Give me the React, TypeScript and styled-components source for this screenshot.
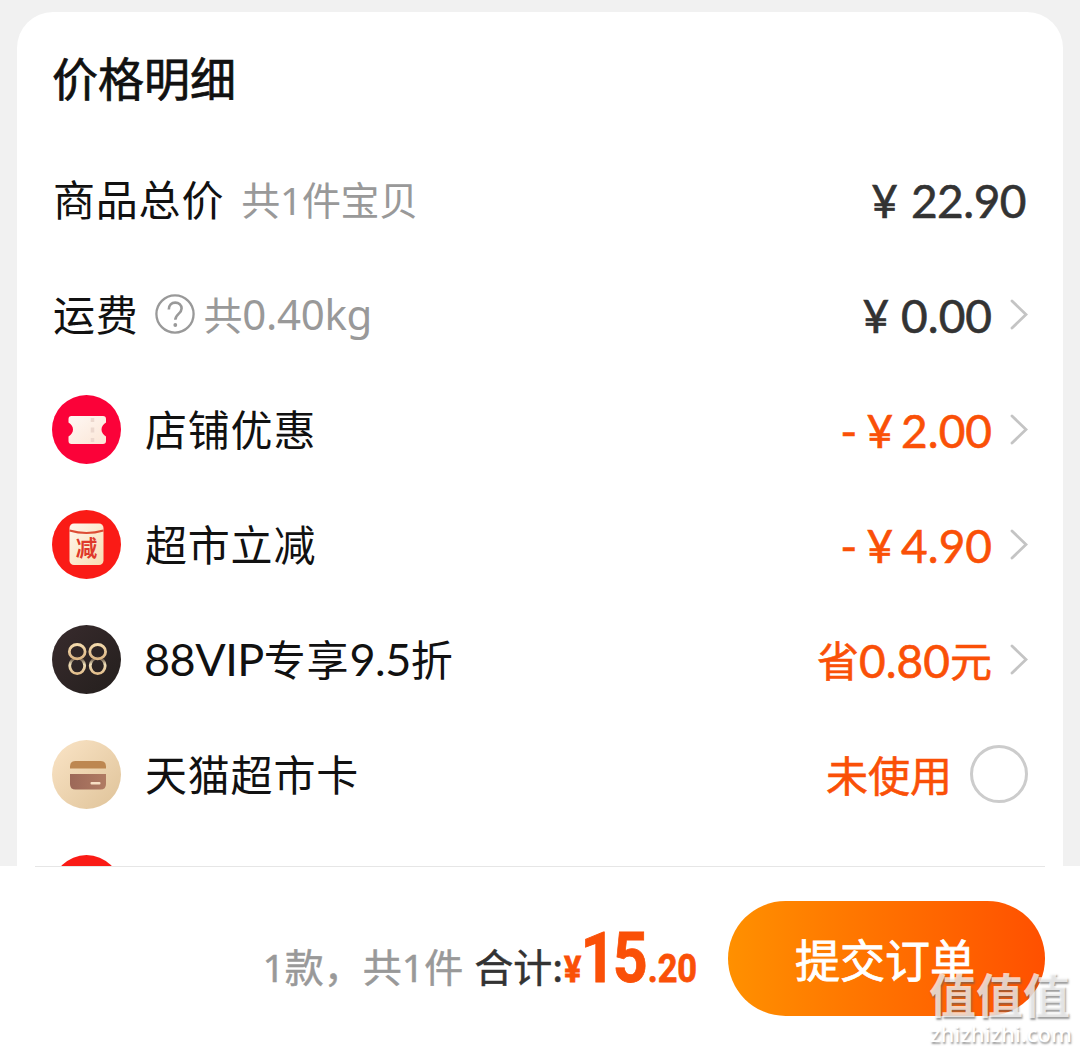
import React from 'react';
import styled, { createGlobalStyle } from 'styled-components';

const GlobalStyle = createGlobalStyle`
  * { box-sizing: border-box; }
  body { margin: 0; background: #f1f1f1; }
`;

const Page = styled.main`
  position: relative;
  display: flex;
  flex-direction: column;
  width: 1080px;
  height: 1052px;
  overflow: hidden;
  background: #f1f1f1;
  font-family: Lato, 'Noto Sans CJK SC', sans-serif;
  color: #111;
`;

const Viewport = styled.div`
  flex: none;
  height: 866px;
  padding: 12px 17px 0;
  overflow: hidden;
`;

const Card = styled.section`
  height: 960px;
  padding: 0 35px;
  background: #fff;
  border-radius: 36px 36px 0 0;
`;

const Title = styled.h1`
  margin: 0;
  height: 130px;
  font: 400 46px/128px 'Noto Sans CJK SC', sans-serif;
  -webkit-text-stroke: 0.7px #111;
`;

const Row = styled.div`
  display: flex;
  align-items: center;
  height: 115px;
  white-space: nowrap;
`;

const Label = styled.span<{ $indent?: number }>`
  font-size: 42px;
  line-height: 60px;
  letter-spacing: 0.8px;
  margin-left: ${(p) => p.$indent ?? 0}px;
`;

const LabelLatin = styled.span`
  font-size: 45px;
  letter-spacing: -0.5px;
`;

const Note = styled.span<{ $gap: number }>`
  font: 400 39px/60px 'Noto Sans', 'Noto Sans CJK SC', sans-serif;
  letter-spacing: -0.3px;
  margin-left: ${(p) => p.$gap}px;
  color: #999;
`;

const NoteLatin = styled.span`
  font-size: 42px;
`;

const Amount = styled.span<{ $accent?: boolean; $inset?: number }>`
  display: flex;
  align-items: center;
  margin-left: auto;
  padding: 3px ${(p) => p.$inset ?? 0}px 0 0;
  font-size: 46px;
  line-height: 60px;
  color: ${(p) => (p.$accent ? '#fa5007' : '#333')};
  -webkit-text-stroke: 0.6px currentColor;
`;

const Part = styled.span<{ $after?: number; $spacing?: number; $cjk?: boolean }>`
  margin-right: ${(p) => p.$after ?? 0}px;
  letter-spacing: ${(p) => p.$spacing ?? 0}px;
  font-size: ${(p) => (p.$cjk ? 42 : 46)}px;
`;

const Trailing = styled.span<{ $gap: number }>`
  display: flex;
  flex: none;
  margin-left: ${(p) => p.$gap}px;
`;

const Radio = styled.span`
  flex: none;
  width: 58px;
  height: 58px;
  margin: 0 0 1px 18px;
  border: 3px solid #ccc;
  border-radius: 50%;
`;

const Badge = styled.svg`
  flex: none;
  width: 69px;
  height: 69px;
`;

const Help = styled.svg`
  flex: none;
  width: 40px;
  height: 40px;
  margin: 0 0 1px 16px;
`;

const Footer = styled.footer`
  display: flex;
  flex: none;
  height: 186px;
  padding: 0 35px;
  background: #fff;
  white-space: nowrap;
`;

const FooterInner = styled.div`
  display: flex;
  flex: 1;
  align-items: flex-start;
  justify-content: flex-end;
  border-top: 1px solid #e6e6e6;
  padding-top: 34px;
`;

const Summary = styled.div`
  display: flex;
  align-items: baseline;
  padding-top: 22px;
`;

const Count = styled.span`
  font: 400 39px/60px 'Noto Sans', 'Noto Sans CJK SC', sans-serif;
  color: #999;
  -webkit-text-stroke: 0.5px #999;
`;

const TotalLabel = styled.span`
  margin: 0 1px 0 11px;
  font: 400 39px/60px 'Noto Sans CJK SC', sans-serif;
  color: #333;
  -webkit-text-stroke: 0.5px #333;
`;

const Total = styled.span`
  display: inline-flex;
  align-items: baseline;
  width: 135px;
  margin-right: 29px;
  font-family: Roboto, sans-serif;
  font-weight: 700;
  color: #fa5007;
  -webkit-text-stroke: 0.8px #fa5007;
  transform: scaleX(0.87);
  transform-origin: left;
`;

const Digits = styled.span<{ $size: number; $spacing?: number; $after?: number }>`
  margin-right: ${(p) => p.$after ?? 0}px;
  font-size: ${(p) => p.$size}px;
  letter-spacing: ${(p) => p.$spacing ?? 0}px;
  line-height: 70px;
`;

const Submit = styled.button`
  flex: none;
  width: 317px;
  height: 115px;
  padding: 0 3px 0 0;
  border: 0;
  border-radius: 58px;
  background: linear-gradient(90deg, #ff9000, #ff5000);
  color: #fff;
  font: 400 45px/112px 'Noto Sans CJK SC', sans-serif;
  -webkit-text-stroke: 0.8px #fff;
`;

const Watermark = styled.div`
  position: absolute;
  left: 929px;
  top: 964px;
  display: flex;
  flex-direction: column;
  color: rgba(255, 255, 255, 0.72);
  text-shadow: 1px 2px 2px rgba(90, 90, 90, 0.6);
`;

const MarkName = styled.span`
  font: 700 47px/58px 'Noto Sans CJK SC', sans-serif;
`;

const MarkSite = styled.span`
  margin-top: -3px;
  padding-left: 1px;
  font: 500 22px/28px 'Noto Sans', sans-serif;
  color: #fff;
`;

const Chevron = () => (
  <svg width="18" height="32" viewBox="0 0 18 32" fill="none">
    <path d="M2 2 16 15.500 2 29" stroke="#c4c4c4" strokeWidth="2.8" strokeLinecap="round" strokeLinejoin="miter" />
  </svg>
);

const Arrow = () => (
  <Trailing $gap={18}>
    <Chevron />
  </Trailing>
);

const HelpIcon = () => (
  <Help viewBox="0 0 40 40" fill="none" stroke="#999" strokeWidth="2.3">
    <circle cx="20" cy="20" r="18.6" />
    <path d="M13.8 15.5c0-4.2 2.8-6.9 6.4-6.9s6.4 2.5 6.4 6c0 5.200-6.300 5.400-6.300 11.200" strokeWidth="2.6" />
    <circle cx="20.3" cy="31" r="1.9" fill="#999" stroke="none" />
  </Help>
);

const CouponIcon = () => (
  <Badge viewBox="0 0 69 69">
    <defs>
      <linearGradient id="coupon" x1="0" x2="1" y1="0" y2="1">
        <stop offset="0" stopColor="#fff8f4" />
        <stop offset="1" stopColor="#fbe6d6" />
      </linearGradient>
    </defs>
    <circle cx="34.5" cy="34.5" r="34.5" fill="#fb0239" />
    <path
      d="M19.500 21h31.500q3 0 3 3v3.500q-4.500 3-4.500 7t4.500 7v4.500q0 3-3 3H19.500q-3 0-3-3v-4.500q4.500-3 4.500-7t-4.500-7v-3.500q0-3 3-3z"
      fill="url(#coupon)"
    />
    <path d="M40.500 23v4M40.500 32.500v5M40.500 43v4" stroke="#ecd8ce" strokeWidth="3.500" />
  </Badge>
);

const ReductionIcon = () => (
  <Badge viewBox="0 0 69 69">
    <defs>
      <linearGradient id="packet" x1="0" x2="1" y1="0" y2="1">
        <stop offset="0" stopColor="#fff8ee" />
        <stop offset="1" stopColor="#f9dcb2" />
      </linearGradient>
    </defs>
    <circle cx="34.5" cy="34.5" r="34.5" fill="#fa1b16" />
    <rect x="17.500" y="13.500" width="34" height="41.500" rx="4.500" fill="url(#packet)" />
    <path d="M17.500 20.500q17 5 34 0" fill="none" stroke="#dd4d35" strokeWidth="2" />
    <text x="34.500" y="45.500" textAnchor="middle" fontSize="21.500" fontWeight="700" fill="#df392b" fontFamily="'Noto Sans CJK SC', sans-serif">
      减
    </text>
  </Badge>
);

const VipIcon = () => (
  <Badge viewBox="0 0 69 69">
    <defs>
      <linearGradient id="vipTop" x1="0" x2="0" y1="0" y2="1">
        <stop offset="0" stopColor="#f3d9ab" />
        <stop offset="1" stopColor="#dcb685" />
      </linearGradient>
      <linearGradient id="vipBottom" x1="0" x2="0" y1="0" y2="1">
        <stop offset="0" stopColor="#4a3a32" />
        <stop offset="0.4" stopColor="#efdfb8" />
        <stop offset="1" stopColor="#e2bd8b" />
      </linearGradient>
      <linearGradient id="vipDisc" x1="0" x2="1" y1="0" y2="1">
        <stop offset="0" stopColor="#382b2d" />
        <stop offset="1" stopColor="#241f1d" />
      </linearGradient>
    </defs>
    <circle cx="34.5" cy="34.5" r="34.5" fill="url(#vipDisc)" />
    <g fill="none" strokeWidth="2.800">
      <ellipse cx="25.200" cy="40.800" rx="7.500" ry="7.900" stroke="url(#vipBottom)" />
      <ellipse cx="45.700" cy="40.800" rx="7.500" ry="7.900" stroke="url(#vipBottom)" />
      <ellipse cx="25.200" cy="26.700" rx="7.900" ry="7.200" stroke="url(#vipTop)" />
      <ellipse cx="45.700" cy="26.700" rx="7.900" ry="7.200" stroke="url(#vipTop)" />
    </g>
  </Badge>
);

const CardIcon = () => (
  <Badge viewBox="0 0 69 69">
    <defs>
      <linearGradient id="cardDisc" x1="0" x2="1" y1="0" y2="1">
        <stop offset="0" stopColor="#fae4c6" />
        <stop offset="1" stopColor="#dfc399" />
      </linearGradient>
      <linearGradient id="cardBase" x1="0" x2="1" y1="0" y2="0">
        <stop offset="0" stopColor="#9c6858" />
        <stop offset="1" stopColor="#b07b63" />
      </linearGradient>
    </defs>
    <circle cx="34.5" cy="34.5" r="34.5" fill="url(#cardDisc)" />
    <path d="M18 28.500v-2q0-5.500 5.500-5.500h25q5.500 0 5.500 5.500v2z" fill="#bd8751" />
    <path d="M18 34h36v10q0 5.500-5.500 5.500h-25q-5.500 0-5.500-5.500z" fill="url(#cardBase)" />
    <rect x="38.500" y="42" width="10" height="2.500" rx="1" fill="#f7dfc4" />
  </Badge>
);

const RedIcon = () => (
  <Badge viewBox="0 0 69 69">
    <circle cx="34.5" cy="34.5" r="34.5" fill="#fa1b16" />
  </Badge>
);

export default function App() {
  return (
    <>
      <GlobalStyle />
      <Page>
        <Viewport>
          <Card>
            <Title>价格明细</Title>
            <Row>
              <Label $indent={1}>商品总价</Label>
              <Note $gap={17}>共1件宝贝</Note>
              <Amount $inset={2}>
                <Part $after={13}>¥</Part>
                <Part $spacing={-0.5}>22.90</Part>
              </Amount>
            </Row>
            <Row>
              <Label $indent={1}>运费</Label>
              <HelpIcon />
              <Note $gap={9}>
                共<NoteLatin>0.40kg</NoteLatin>
              </Note>
              <Amount>
                <Part $after={12}>¥</Part>
                <Part>0.00</Part>
              </Amount>
              <Arrow />
            </Row>
            <Row>
              <CouponIcon />
              <Label $indent={24}>店铺优惠</Label>
              <Amount $accent>
                <Part $after={9}>-</Part>
                <Part $after={8}>¥</Part>
                <Part>2.00</Part>
              </Amount>
              <Arrow />
            </Row>
            <Row>
              <ReductionIcon />
              <Label $indent={24}>超市立减</Label>
              <Amount $accent>
                <Part $after={9}>-</Part>
                <Part $after={8}>¥</Part>
                <Part>4.90</Part>
              </Amount>
              <Arrow />
            </Row>
            <Row>
              <VipIcon />
              <Label $indent={23}>
                <LabelLatin>88VIP</LabelLatin>专享<LabelLatin>9.5</LabelLatin>折
              </Label>
              <Amount $accent>
                <Part $cjk>省</Part>
                <Part>0.80</Part>
                <Part $cjk>元</Part>
              </Amount>
              <Arrow />
            </Row>
            <Row>
              <CardIcon />
              <Label $indent={24}>天猫超市卡</Label>
              <Amount $accent>
                <Part $cjk>未使用</Part>
              </Amount>
              <Radio />
            </Row>
            <Row>
              <RedIcon />
            </Row>
          </Card>
        </Viewport>
        <Footer>
          <FooterInner>
            <Summary>
              <Count>1款，共1件</Count>
              <TotalLabel>合计:</TotalLabel>
              <Total>
                <Digits $size={37} $spacing={-1}>¥</Digits>
                <Digits $size={70} $spacing={-3} $after={3}>15</Digits>
                <Digits $size={39.5}>.20</Digits>
              </Total>
            </Summary>
            <Submit>提交订单</Submit>
          </FooterInner>
        </Footer>
        <Watermark>
          <MarkName>值值值</MarkName>
          <MarkSite>zhizhizhi.com</MarkSite>
        </Watermark>
      </Page>
    </>
  );
}
